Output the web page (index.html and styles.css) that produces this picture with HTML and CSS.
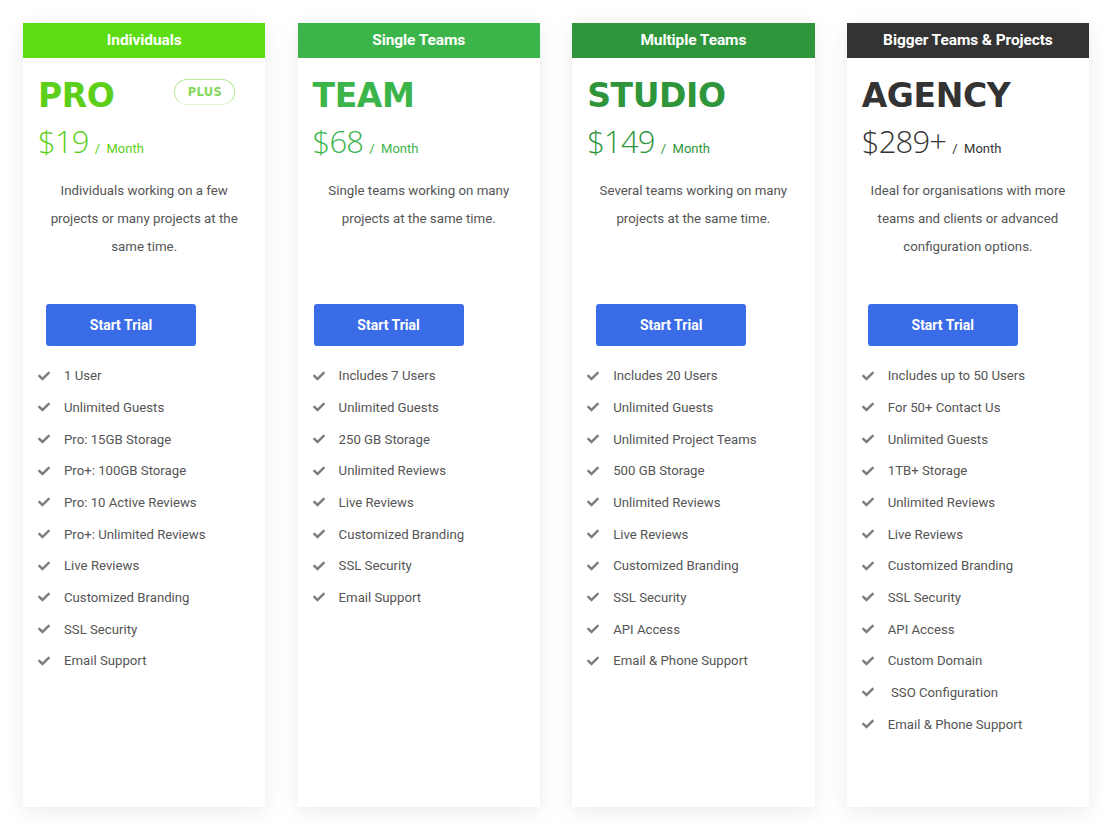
FILE: index.html
```html
<!DOCTYPE html>
<html lang="en">
<head>
<meta charset="utf-8">
<title>Pricing</title>
<link rel="stylesheet" href="styles.css">
</head>
<body>
<svg width="0" height="0" style="position:absolute">
  <defs>
    <symbol id="chk" viewBox="0 0 512 512"><path d="M173.9 439.4L7.5 273c-10-10-10-26.2 0-36.2l36.2-36.2c10-10 26.2-10 36.2 0L192 312.7 432.1 72.6c10-10 26.2-10 36.2 0l36.2 36.2c10 10 10 26.2 0 36.2L210.1 439.4c-10 10-26.2 10-36.2 0z"/></symbol>
  </defs>
</svg>
<div class="pricing">
  <div class="card card--pro">
    <div class="card__head">Individuals</div>
    <div class="card__body">
      <div class="card__top">
        <h2 class="card__title">PRO</h2>
        <span class="badge">PLUS</span>
      </div>
      <div class="price"><span class="price__amt">$19</span><span class="price__per">/&nbsp; Month</span></div>
      <p class="desc">Individuals working on a few projects or many projects at the same time.</p>
      <a class="btn">Start Trial</a>
      <ul class="features">
        <li><svg class="ico"><use href="#chk"/></svg>1 User</li>
        <li><svg class="ico"><use href="#chk"/></svg>Unlimited Guests</li>
        <li><svg class="ico"><use href="#chk"/></svg>Pro: 15GB Storage</li>
        <li><svg class="ico"><use href="#chk"/></svg>Pro+: 100GB Storage</li>
        <li><svg class="ico"><use href="#chk"/></svg>Pro: 10 Active Reviews</li>
        <li><svg class="ico"><use href="#chk"/></svg>Pro+: Unlimited Reviews</li>
        <li><svg class="ico"><use href="#chk"/></svg>Live Reviews</li>
        <li><svg class="ico"><use href="#chk"/></svg>Customized Branding</li>
        <li><svg class="ico"><use href="#chk"/></svg>SSL Security</li>
        <li><svg class="ico"><use href="#chk"/></svg>Email Support</li>
      </ul>
    </div>
  </div>

  <div class="card card--team">
    <div class="card__head">Single Teams</div>
    <div class="card__body">
      <div class="card__top">
        <h2 class="card__title">TEAM</h2>
      </div>
      <div class="price"><span class="price__amt">$68</span><span class="price__per">/&nbsp; Month</span></div>
      <p class="desc">Single teams working on many projects at the same time.</p>
      <a class="btn">Start Trial</a>
      <ul class="features">
        <li><svg class="ico"><use href="#chk"/></svg>Includes 7 Users</li>
        <li><svg class="ico"><use href="#chk"/></svg>Unlimited Guests</li>
        <li><svg class="ico"><use href="#chk"/></svg>250 GB Storage</li>
        <li><svg class="ico"><use href="#chk"/></svg>Unlimited Reviews</li>
        <li><svg class="ico"><use href="#chk"/></svg>Live Reviews</li>
        <li><svg class="ico"><use href="#chk"/></svg>Customized Branding</li>
        <li><svg class="ico"><use href="#chk"/></svg>SSL Security</li>
        <li><svg class="ico"><use href="#chk"/></svg>Email Support</li>
      </ul>
    </div>
  </div>

  <div class="card card--studio">
    <div class="card__head">Multiple Teams</div>
    <div class="card__body">
      <div class="card__top">
        <h2 class="card__title">STUDIO</h2>
      </div>
      <div class="price"><span class="price__amt">$149</span><span class="price__per">/&nbsp; Month</span></div>
      <p class="desc">Several teams working on many projects at the same time.</p>
      <a class="btn">Start Trial</a>
      <ul class="features">
        <li><svg class="ico"><use href="#chk"/></svg>Includes 20 Users</li>
        <li><svg class="ico"><use href="#chk"/></svg>Unlimited Guests</li>
        <li><svg class="ico"><use href="#chk"/></svg>Unlimited Project Teams</li>
        <li><svg class="ico"><use href="#chk"/></svg>500 GB Storage</li>
        <li><svg class="ico"><use href="#chk"/></svg>Unlimited Reviews</li>
        <li><svg class="ico"><use href="#chk"/></svg>Live Reviews</li>
        <li><svg class="ico"><use href="#chk"/></svg>Customized Branding</li>
        <li><svg class="ico"><use href="#chk"/></svg>SSL Security</li>
        <li><svg class="ico"><use href="#chk"/></svg>API Access</li>
        <li><svg class="ico"><use href="#chk"/></svg>Email &amp; Phone Support</li>
      </ul>
    </div>
  </div>

  <div class="card card--agency">
    <div class="card__head">Bigger Teams &amp; Projects</div>
    <div class="card__body">
      <div class="card__top">
        <h2 class="card__title">AGENCY</h2>
      </div>
      <div class="price"><span class="price__amt">$289+</span><span class="price__per">/&nbsp; Month</span></div>
      <p class="desc">Ideal for organisations with more teams and clients or advanced configuration options.</p>
      <a class="btn">Start Trial</a>
      <ul class="features">
        <li><svg class="ico"><use href="#chk"/></svg>Includes up to 50 Users</li>
        <li><svg class="ico"><use href="#chk"/></svg>For 50+ Contact Us</li>
        <li><svg class="ico"><use href="#chk"/></svg>Unlimited Guests</li>
        <li><svg class="ico"><use href="#chk"/></svg>1TB+ Storage</li>
        <li><svg class="ico"><use href="#chk"/></svg>Unlimited Reviews</li>
        <li><svg class="ico"><use href="#chk"/></svg>Live Reviews</li>
        <li><svg class="ico"><use href="#chk"/></svg>Customized Branding</li>
        <li><svg class="ico"><use href="#chk"/></svg>SSL Security</li>
        <li><svg class="ico"><use href="#chk"/></svg>API Access</li>
        <li><svg class="ico"><use href="#chk"/></svg>Custom Domain</li>
        <li><svg class="ico"><use href="#chk"/></svg>&nbsp;SSO Configuration</li>
        <li><svg class="ico"><use href="#chk"/></svg>Email &amp; Phone Support</li>
      </ul>
    </div>
  </div>
</div>
</body>
</html>
```

FILE: styles.css
```css
* { box-sizing: border-box; }

html, body {
  margin: 0;
  padding: 0;
  background: #ffffff;
}

body {
  font-family: Roboto, "Liberation Sans", Arial, sans-serif;
  color: #555;
  width: 1108px;
  height: 826px;
  overflow: hidden;
}

.pricing {
  display: flex;
  gap: 32.2px;
  padding: 23px 0 0 23px;
  align-items: flex-start;
}

.card {
  width: 242.4px;
  height: 784px;
  background: #fff;
  box-shadow: 0 5px 22px rgba(0, 0, 0, 0.075), 0 0 6px rgba(0, 0, 0, 0.025);
  display: flex;
  flex-direction: column;
}

.card__head {
  height: 35px;
  line-height: 35px;
  text-align: center;
  color: #fff;
  font-weight: 700;
  font-size: 15.5px;
  letter-spacing: -0.1px;
}

.card__body {
  padding: 0 15px;
  display: flex;
  flex-direction: column;
}

.card__top {
  display: flex;
  justify-content: space-between;
  align-items: flex-start;
  height: 61px;
  padding-top: 18px;
}

.card__title {
  margin: 0;
  font-family: "DejaVu Sans", "Liberation Sans", sans-serif;
  font-weight: 700;
  font-size: 33px;
  line-height: 40px;
  letter-spacing: -0.4px;
}

.badge {
  margin-top: 3px;
  margin-right: 15px;
  width: 61px;
  height: 26px;
  border: 1.5px solid #b6e99a;
  border-bottom-color: #e0f5d2;
  border-radius: 13px;
  font-family: "DejaVu Sans", sans-serif;
  font-weight: 700;
  font-size: 11.5px;
  letter-spacing: 0.3px;
  color: #83d85a;
  display: flex;
  align-items: center;
  justify-content: center;
}

.price {
  display: flex;
  align-items: baseline;
  height: 44px;
}

.price__amt {
  font-family: "Open Sans", "Liberation Sans", sans-serif;
  font-weight: 300;
  font-size: 31px;
  letter-spacing: -0.8px;
  line-height: 44px;
}

.price__per {
  font-size: 13px;
  margin-left: 6px;
}

.desc {
  margin: 0;
  padding-top: 14px;
  height: 141px;
  text-align: center;
  font-size: 13.3px;
  line-height: 28px;
  color: #555;
}

.btn {
  display: flex;
  align-items: center;
  justify-content: center;
  width: 150px;
  height: 42px;
  margin-left: 8px;
  background: #3a6ce7;
  color: #fff;
  border-radius: 3px;
  font-weight: 700;
  font-size: 14px;
}

.card--team .btn { margin-left: 1px; }
.card--studio .btn { margin-left: 9px; }
.card--agency .btn { margin-left: 6px; }

.features {
  list-style: none;
  margin: 14px 0 0;
  padding: 0;
}

.features li {
  display: flex;
  align-items: center;
  height: 31.67px;
  font-size: 13.2px;
  color: #555;
}

.ico {
  width: 12px;
  height: 12px;
  fill: #7d7d7d;
  margin-right: 14px;
  flex: none;
}

.card--pro .card__head { background: #5cdc12; }
.card--pro .card__title,
.card--pro .price { color: #5ccf1a; }

.card--team .card__head { background: #3bb54a; }
.card--team .card__title,
.card--team .price { color: #3bb54a; }

.card--studio .card__head { background: #2e953b; }
.card--studio .card__title,
.card--studio .price { color: #2e953b; }

.card--agency .card__head { background: #333333; }
.card--agency .card__title,
.card--agency .price { color: #333333; }
```
